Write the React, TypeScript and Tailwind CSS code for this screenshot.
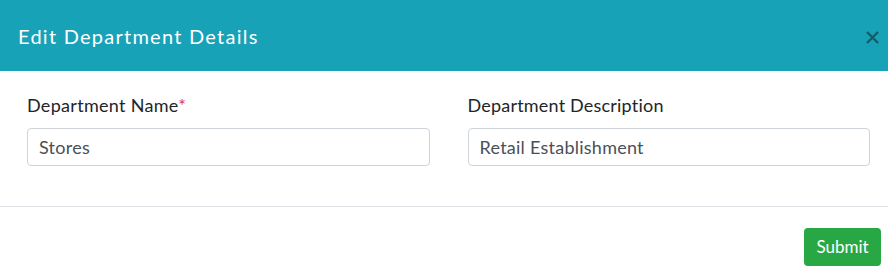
export default function App() {
  return (
    <div className="w-[888px] h-[280px] bg-white overflow-hidden font-['Lato','Liberation_Sans',sans-serif]">
      <div className="h-[71px] bg-[#17a2b8] flex items-center justify-between pl-[18px] pr-[8px]">
        <h5 className="text-[20px] text-white tracking-[1.25px] leading-[24px]">Edit Department Details</h5>
        <button className="w-[16px] h-[16px] flex items-center justify-center text-[#0f5f6b] mt-[3px]" aria-label="Close">
          <svg width="13" height="13" viewBox="0 0 13 13" fill="none" stroke="currentColor" strokeWidth="2.4" strokeLinecap="butt">
            <path d="M1 1L12 12M12 1L1 12" />
          </svg>
        </button>
      </div>

      <div className="pt-[22px] pb-[40px] pl-[27px] pr-[18px] grid grid-cols-2 gap-x-[38px]">
        <div>
          <label className="block text-[18px] tracking-[0.3px] leading-[24px] text-[#212529] mb-[11px]">
            Department Name<span className="text-[#dc3545]">*</span>
          </label>
          <input
            className="w-full h-[38px] border border-[#ced4da] rounded-[4px] px-[11px] text-[18px] tracking-[0.25px] text-[#495057] outline-none"
            defaultValue="Stores"
          />
        </div>
        <div>
          <label className="block text-[18px] tracking-[0.2px] leading-[24px] text-[#212529] mb-[11px]">Department Description</label>
          <input
            className="w-full h-[38px] border border-[#ced4da] rounded-[4px] px-[11px] text-[18px] tracking-[0.25px] text-[#495057] outline-none"
            defaultValue="Retail Establishment"
          />
        </div>
      </div>

      <div className="border-t border-[#dee2e6] flex justify-end pt-[21px] pr-[7px]">
        <button className="h-[38px] w-[77px] bg-[#28a745] text-white text-[17px] rounded-[4px]">Submit</button>
      </div>
    </div>
  );
}
